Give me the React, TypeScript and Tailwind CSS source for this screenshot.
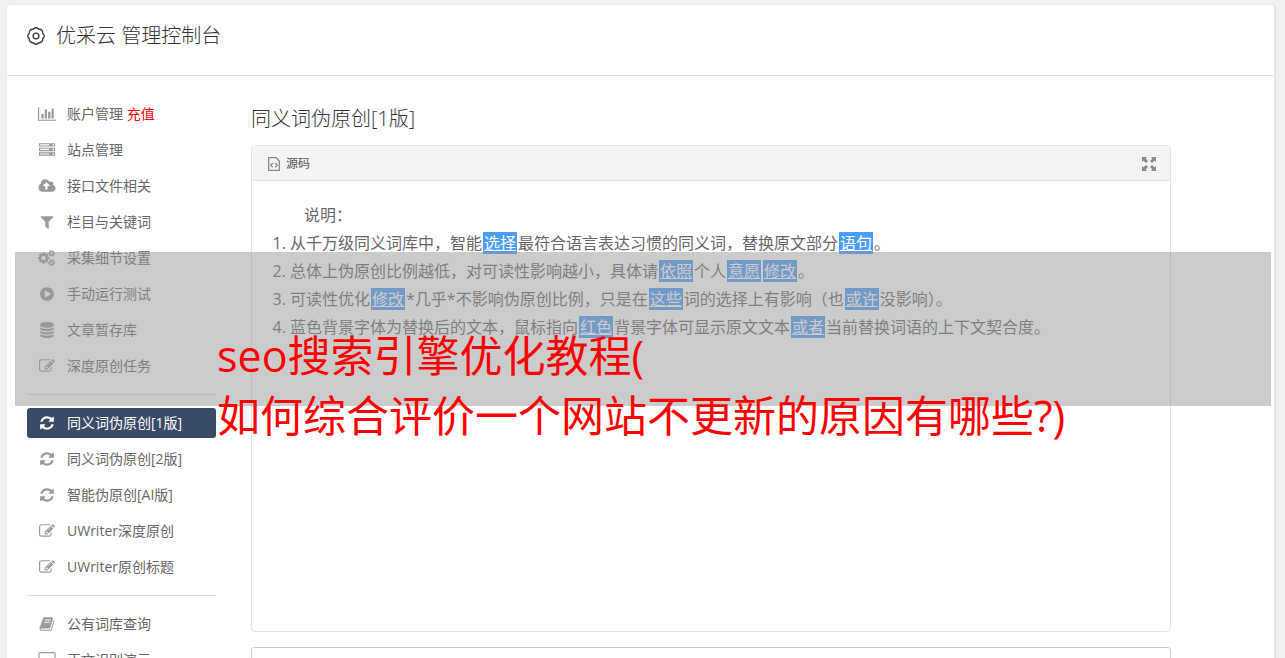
import type { ReactNode } from 'react';

interface Glyph {
  width: number;
  path: string;
}

interface MenuItem {
  icon: Glyph;
  label: string;
  extra?: string;
  active?: boolean;
}

const ICONS = {
  barChart: {
    width: 2048,
    path: 'M640 896v512h-256v-512h256zm384-512v1024h-256v-1024h256zm1024 1152v128h-2048v-1536h128v1408h1920zm-640-896v768h-256v-768h256zm384-384v1152h-256v-1152h256z',
  },
  server: {
    width: 1792,
    path: 'M128 1408h1024v-128h-1024v128zm0-512h1024v-128h-1024v128zm1568 448q0-40-28-68t-68-28-68 28-28 68 28 68 68 28 68-28 28-68zm-1568-960h1024v-128h-1024v128zm1568 448q0-40-28-68t-68-28-68 28-28 68 28 68 68 28 68-28 28-68zm0-512q0-40-28-68t-68-28-68 28-28 68 28 68 68 28 68-28 28-68zm96 832v384h-1792v-384h1792zm0-512v384h-1792v-384h1792zm0-512v384h-1792v-384h1792z',
  },
  cloudUpload: {
    width: 1920,
    path: 'M1280 864q0-14-9-23l-352-352q-9-9-23-9t-23 9l-351 351q-10 12-10 24 0 14 9 23t23 9h224v352q0 13 9.5 22.5t22.5 9.5h192q13 0 22.5-9.5t9.5-22.5v-352h224q13 0 22.5-9.5t9.5-22.5zm640 288q0 159-112.5 271.5t-271.5 112.5h-1088q-185 0-316.5-131.5t-131.5-316.5q0-130 70-240t188-165q-2-30-2-43 0-212 150-362t362-150q156 0 285.5 87t188.5 231q71-62 166-62 106 0 181 75t75 181q0 76-41 138 130 31 213.5 135.5t83.5 238.5z',
  },
  filter: {
    width: 1792,
    path: 'M1595 295q17 41-14 70l-493 493v742q0 42-39 59-13 5-25 5-27 0-45-19l-256-256q-19-19-19-45v-486l-493-493q-31-29-14-70 17-39 59-39h1280q42 0 59 39z',
  },
  cogs: {
    width: 1920,
    path: 'M832 896q0-106-75-181t-181-75-181 75-75 181 75 181 181 75 181-75 75-181zm768 512q0-52-38-90t-90-38-90 38-38 90q0 53 37.5 90.5t90.5 37.5 90.5-37.5 37.5-90.5zm0-1024q0-52-38-90t-90-38-90 38-38 90q0 53 37.5 90.5t90.5 37.5 90.5-37.5 37.5-90.5zm-384 421v185q0 10-7 19.5t-16 10.5l-155 24q-11 35-32 76 34 48 90 115 7 11 7 20 0 12-7 19-23 30-82.5 89.5t-78.5 59.5q-11 0-21-7l-115-90q-37 19-77 31-11 108-23 155-7 24-30 24h-186q-11 0-20-7.5t-10-17.5l-23-153q-34-10-75-31l-118 89q-7 7-20 7-11 0-21-8-144-133-144-160 0-9 7-19 10-14 41-53t47-61q-23-44-35-82l-152-24q-10-1-17-9.5t-7-19.5v-185q0-10 7-19.5t16-10.5l155-24q11-35 32-76-34-48-90-115-7-11-7-20 0-12 7-20 22-30 82-89t79-59q11 0 21 7l115 90q34-18 77-32 11-108 23-154 7-24 30-24h186q11 0 20 7.5t10 17.5l23 153q34 10 75 31l118-89q8-7 20-7 11 0 21 8 144 133 144 160 0 8-7 19-12 16-42 54t-45 60q23 48 34 82l152 23q10 2 17 10.5t7 19.5zm640 533v140q0 16-149 31-12 27-30 52 51 113 51 138 0 4-4 7-122 71-124 71-8 0-46-47t-52-68q-20 2-30 2t-30-2q-14 21-52 68t-46 47q-2 0-124-71-4-3-4-7 0-25 51-138-18-25-30-52-149-15-149-31v-140q0-16 149-31 13-29 30-52-51-113-51-138 0-4 4-7 4-2 35-20t59-34 30-16q8 0 46 46.5t52 67.5q20-2 30-2t30 2q51-71 92-112l6-2q4 0 124 70 4 3 4 7 0 25-51 138 17 23 30 52 149 15 149 31zm0-1024v140q0 16-149 31-12 27-30 52 51 113 51 138 0 4-4 7-122 71-124 71-8 0-46-47t-52-68q-20 2-30 2t-30-2q-14 21-52 68t-46 47q-2 0-124-71-4-3-4-7 0-25 51-138-18-25-30-52-149-15-149-31v-140q0-16 149-31 13-29 30-52-51-113-51-138 0-4 4-7 4-2 35-20t59-34 30-16q8 0 46 46.5t52 67.5q20-2 30-2t30 2q51-71 92-112l6-2q4 0 124 70 4 3 4 7 0 25-51 138 17 23 30 52 149 15 149 31z',
  },
  playCircle: {
    width: 1792,
    path: 'M896 128q209 0 385.5 103t279.5 279.5 103 385.5-103 385.5-279.5 279.5-385.5 103-385.5-103-279.5-279.5-103-385.5 103-385.5 279.5-279.5 385.5-103zm384 823q32-18 32-55t-32-55l-544-320q-31-19-64-1-32 19-32 56v640q0 37 32 56 16 8 32 8 17 0 32-9z',
  },
  database: {
    width: 1792,
    path: 'M896 768q237 0 443-43t325-127v170q0 69-103 128t-280 93.5-385 34.5-385-34.5-280-93.5-103-128v-170q119 84 325 127t443 43zm0 768q237 0 443-43t325-127v170q0 69-103 128t-280 93.5-385 34.5-385-34.5-280-93.5-103-128v-170q119 84 325 127t443 43zm0-384q237 0 443-43t325-127v170q0 69-103 128t-280 93.5-385 34.5-385-34.5-280-93.5-103-128v-170q119 84 325 127t443 43zm0-1152q208 0 385 34.5t280 93.5 103 128v128q0 69-103 128t-280 93.5-385 34.5-385-34.5-280-93.5-103-128v-128q0-69 103-128t280-93.5 385-34.5z',
  },
  edit: {
    width: 1792,
    path: 'M888 1184l116-116-152-152-116 116v56h96v96h56zm440-720q-16-16-33 1l-350 350q-17 17-1 33t33-1l350-350q17-17 1-33zm80 594v190q0 119-84.5 203.5t-203.5 84.5h-832q-119 0-203.5-84.5t-84.5-203.5v-832q0-119 84.5-203.5t203.5-84.5h832q63 0 117 25 15 7 18 23 3 17-9 29l-49 49q-14 14-32 8-23-6-45-6h-832q-66 0-113 47t-47 113v832q0 66 47 113t113 47h832q66 0 113-47t47-113v-126q0-13 9-22l64-64q15-15 35-7t20 29zm-96-738l288 288-672 672h-288v-288zm444 132l-92 92-288-288 92-92q28-28 68-28t68 28l152 152q28 28 28 68t-28 68z',
  },
  refresh: {
    width: 1792,
    path: 'M1639 1056q0 5-1 7-64 268-268 434.5t-478 166.5q-146 0-282.5-55t-243.5-157l-129 129q-19 19-45 19t-45-19-19-45v-448q0-26 19-45t45-19h448q26 0 45 19t19 45-19 45l-137 137q71 66 161 102t187 36q134 0 250-65t186-179q11-17 53-117 8-23 30-23h192q13 0 22.5 9.5t9.5 22.5zm25-800v448q0 26-19 45t-45 19h-448q-26 0-45-19t-19-45 19-45l138-138q-148-137-349-137-134 0-250 65t-186 179q-11 17-53 117-8 23-30 23h-199q-13 0-22.5-9.5t-9.5-22.5v-7q65-268 270-434.5t480-166.5q146 0 284 55.5t245 156.5l130-129q19-19 45-19t45 19 19 45z',
  },
  book: {
    width: 1792,
    path: 'M1703 478q40 57 18 129l-275 906q-19 64-76.5 107.5t-122.5 43.5h-923q-77 0-148.5-53.5t-99.5-131.5q-24-67-2-127 0-4 3-27t4-37q1-8-3-21.5t-3-19.5q2-11 8-21t16.5-23.5 16.5-23.5q23-38 45-91.5t30-91.5q3-10 .5-30t-.5-28q3-11 17-28t17-23q21-36 42-92t25-90q1-9-2.5-32t.5-28q4-13 22-30.5t22-22.5q19-26 42.5-84.5t27.5-96.5q1-8-3-25.5t-2-26.5q2-8 9-18t18-23 17-21q8-12 16.5-30.5t15-35 16-36 19.5-32 26.5-23.5 36-11.5 47.5 5.5l-1 3q38-9 51-9h761q74 0 114 56t18 130l-274 906q-36 119-71.5 153.5t-128.5 34.5h-869q-27 0-38 15-11 16-1 43 24 70 144 70h923q29 0 56-15.5t35-41.5l300-987q7-22 5-57 38 15 59 43zm-1064 2q-4 13 2 22.5t20 9.5h608q13 0 25.5-9.5t16.5-22.5l21-64q4-13-2-22.5t-20-9.5h-608q-13 0-25.5 9.5t-16.5 22.5zm-83 256q-4 13 2 22.5t20 9.5h608q13 0 25.5-9.5t16.5-22.5l21-64q4-13-2-22.5t-20-9.5h-608q-13 0-25.5 9.5t-16.5 22.5z',
  },
  desktop: {
    width: 1920,
    path: 'M1792 992v-832q0-13-9.500-22.500t-22.500-9.500h-1600q-13 0-22.500 9.500t-9.500 22.500v832q0 13 9.500 22.500t22.500 9.500h1600q13 0 22.500-9.500t9.500-22.500zm128-832v1088q0 66-47 113t-113 47h-544q0 37 16 77.500t32 71 16 43.500q0 26-19 45t-45 19h-512q-26 0-45-19t-19-45q0-14 16-44t32-70 16-78h-544q-66 0-113-47t-47-113v-1088q0-66 47-113t113-47h1600q66 0 113 47t47 113z',
  },
};

const MENU: MenuItem[][] = [
  [
    { icon: ICONS.barChart, label: '账户管理', extra: '充值' },
    { icon: ICONS.server, label: '站点管理' },
    { icon: ICONS.cloudUpload, label: '接口文件相关' },
    { icon: ICONS.filter, label: '栏目与关键词' },
    { icon: ICONS.cogs, label: '采集细节设置' },
    { icon: ICONS.playCircle, label: '手动运行测试' },
    { icon: ICONS.database, label: '文章暂存库' },
    { icon: ICONS.edit, label: '深度原创任务' },
  ],
  [
    { icon: ICONS.refresh, label: '同义词伪原创[1版]', active: true },
    { icon: ICONS.refresh, label: '同义词伪原创[2版]' },
    { icon: ICONS.refresh, label: '智能伪原创[AI版]' },
    { icon: ICONS.edit, label: 'UWriter深度原创' },
    { icon: ICONS.edit, label: 'UWriter原创标题' },
  ],
  [
    { icon: ICONS.book, label: '公有词库查询' },
    { icon: ICONS.desktop, label: '正文识别演示' },
  ],
];

function MenuIcon({ icon }: { icon: Glyph }) {
  return (
    <svg viewBox={`0 0 ${icon.width} 1792`} className="h-4 w-[18px]" fill="currentColor" aria-hidden="true">
      <path d={icon.path} />
    </svg>
  );
}

function GearIcon() {
  return (
    <svg viewBox="0 0 18 18" className="size-[18px]" fill="none" stroke="currentColor" strokeWidth="1.3" aria-hidden="true">
      <path d="M6.24 2.35A3.2 3.2 0 0 1 11.76 2.35A3.2 3.2 0 0 1 15.65 6.24A3.2 3.2 0 0 1 15.65 11.76A3.2 3.2 0 0 1 11.76 15.65A3.2 3.2 0 0 1 6.24 15.65A3.2 3.2 0 0 1 2.35 11.76A3.2 3.2 0 0 1 2.35 6.24A3.2 3.2 0 0 1 6.24 2.35z" />
      <circle cx="9" cy="9" r="2.9" />
    </svg>
  );
}

function SourceIcon() {
  return (
    <svg viewBox="0 0 12 14" className="h-3.5 w-3" fill="none" stroke="#888" strokeWidth="1.3" aria-hidden="true">
      <path d="M.7.7h7.300l3.300 3.300v9.300H.7z" />
      <path d="M4.800 6 2.800 8.200l2 2.200M7.200 6l2 2.200-2 2.200" />
    </svg>
  );
}

function ExpandIcon() {
  return (
    <svg viewBox="0 0 14 14" className="size-3.5" fill="#888" aria-hidden="true">
      <path d="M0 0h5L3.500 1.500 6 4 4 6 1.500 3.500 0 5zM14 0v5l-1.500-1.500L10 6 8 4l2.500-2.500L9 0zM0 14V9l1.500 1.500L4 8l2 2-2.500 2.500L5 14zM14 14H9l1.500-1.500L8 10l2-2 2.500 2.500L14 9z" />
    </svg>
  );
}

function Word({ children }: { children: ReactNode }) {
  return <span className="mx-px bg-[#4a9df8] px-px text-white underline">{children}</span>;
}

function Sidebar() {
  return (
    <nav className="w-[189px] shrink-0 pt-[23px]">
      {MENU.map((group, i) => (
        <ul
          key={i}
          className={
            i === 0
              ? 'flex flex-col gap-1.5'
              : 'mt-[13px] flex flex-col gap-1.5 border-t border-[#ddd] pt-[13px]'
          }
        >
          {group.map((item) => (
            <li key={item.label}>
              <a
                href="#"
                className={
                  item.active
                    ? 'flex h-[30px] items-center gap-[11px] rounded-[3px] bg-[#3a4b66] pl-[11px] text-sm text-white'
                    : 'flex h-[30px] items-center gap-[11px] rounded-[3px] pl-[11px] text-sm text-[#666]'
                }
              >
                <span className={item.active ? 'text-white' : 'text-[#999]'}>
                  <MenuIcon icon={item.icon} />
                </span>
                <span>
                  {item.label}
                  {item.extra && <span className="text-[#f00]"> {item.extra}</span>}
                </span>
              </a>
            </li>
          ))}
        </ul>
      ))}
    </nav>
  );
}

function SourcePanel() {
  return (
    <section className="mt-3 flex min-h-[487px] flex-col rounded border border-[#e3e3e3]">
      <header className="flex h-[35px] items-center justify-between border-b border-[#e3e3e3] bg-[#f4f4f4] pt-0.5 pr-3.5 pl-4">
        <div className="flex items-center gap-1.5 text-xs text-[#555]">
          <SourceIcon />
          <span>源码</span>
        </div>
        <button type="button" aria-label="全屏">
          <ExpandIcon />
        </button>
      </header>
      <div className="px-5 pt-5 text-base leading-7 text-[#666]">
        <p className="pl-8">说明：</p>
        <ol className="list-decimal pl-[18px]">
          <li>
            从千万级同义词库中，智能<Word>选择</Word>最符合语言表达习惯的同义词，替换原文部分<Word>语句</Word>。
          </li>
          <li>
            总体上伪原创比例越低，对可读性影响越小，具体请<Word>依照</Word>个人<Word>意愿</Word>
            <Word>修改</Word>。
          </li>
          <li>
            可读性优化<Word>修改</Word>*几乎*不影响伪原创比例，只是在<Word>这些</Word>词的选择上有影响（也<Word>或许</Word>没影响）。
          </li>
          <li>
            蓝色背景字体为替换后的文本，鼠标指向<Word>红色</Word>背景字体可显示原文文本<Word>或者</Word>当前替换词语的上下文契合度。
          </li>
        </ol>
      </div>
    </section>
  );
}

export default function App() {
  return (
    <div className="relative h-screen overflow-hidden bg-[#f0f0f0] pt-[5px] pr-[9px] pl-[7px] font-['Open_Sans','Noto_Sans_CJK_SC',sans-serif]">
      <div className="rounded border-r-2 border-[#e3e3e3] bg-white shadow-[0_0_1px_0_#ccc]">
        <header className="flex h-[71px] items-center gap-[11px] border-b border-[#e3e3e3] pb-2 pl-5 text-[#333]">
          <GearIcon />
          <h1 className="text-xl font-light">优采云 管理控制台</h1>
        </header>

        <div className="flex gap-[35px] pl-5">
          <Sidebar />
          <main className="max-w-[920px] flex-1 pt-[29px]">
            <h2 className="text-xl font-light text-[#333]">同义词伪原创[1版]</h2>
            <SourcePanel />
            <textarea
              aria-label="原文"
              className="mt-[15px] block h-40 w-full resize-none rounded-[3px] border border-[#ccc] bg-white"
            />
          </main>
        </div>
      </div>

      {/* title banner over the page */}
      <div className="pointer-events-none absolute top-[252px] right-3.5 left-[15px] h-[154px] bg-[#979797]/50">
        <p className="pt-[74px] pl-[202px] text-[43px] leading-[60px] whitespace-nowrap text-[#f00]">
          seo搜索引擎优化教程(
          <br />
          如何综合评价一个网站不更新的原因有哪些?)
        </p>
      </div>
    </div>
  );
}
